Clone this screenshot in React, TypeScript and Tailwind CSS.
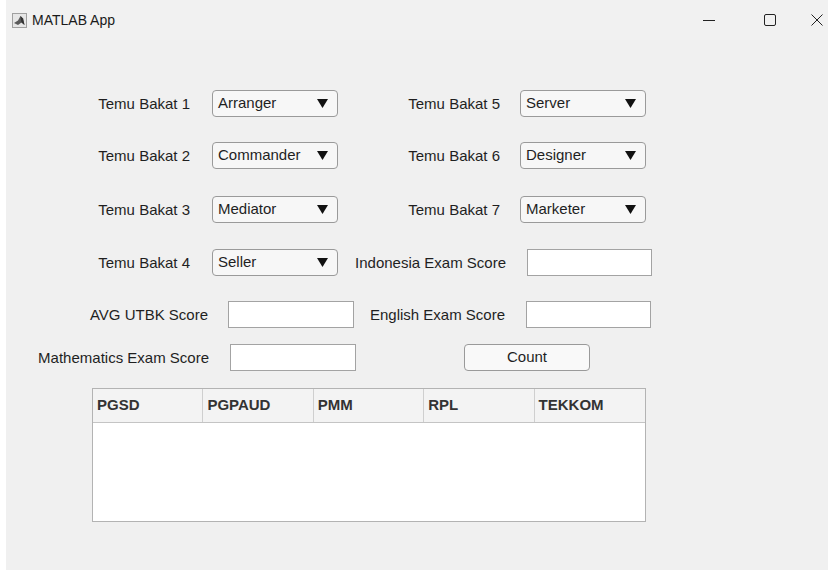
import React from 'react';

const labelCls = 'text-[15px] leading-none text-[#1f1f1f] text-right whitespace-nowrap';

function Dropdown({ value, className = '' }: { value: string; className?: string }) {
  return (
    <div
      className={`h-[27px] w-[126px] flex items-center justify-between pl-[5px] pr-[9px] rounded-[4px] border border-[#9a9a9a] bg-[#f7f7f7] text-[15px] text-[#1f1f1f] ${className}`}
    >
      <span>{value}</span>
      <svg width="11" height="9" viewBox="0 0 11 9">
        <path d="M0 0 H11 L5.5 9 Z" fill="#111" />
      </svg>
    </div>
  );
}

function Field({ className = '' }: { className?: string }) {
  return <div className={`h-[27px] bg-white border border-[#a3a3a3] ${className}`} />;
}

function MatlabIcon() {
  return (
    <svg width="15" height="15" viewBox="0 0 15 15">
      <rect x="0.5" y="0.5" width="14" height="14" fill="#e6e6e6" stroke="#a0a0a0" />
      <path d="M2 10 L6 7.5 L8.5 3 L11 5.5 L12.5 12 L9.5 9.5 L6 12 Z" fill="#5a5a5a" />
      <path d="M8.5 3 L11 5.5 L12.5 12 L9.5 9.5 Z" fill="#333" />
    </svg>
  );
}

const columns = ['PGSD', 'PGPAUD', 'PMM', 'RPL', 'TEKKOM'];

export default function App() {
  return (
    <div className="w-[828px] h-[577px] bg-white font-['Liberation_Sans',Arial,sans-serif] overflow-hidden">
      <div className="ml-[6px] w-[822px] h-[570px] bg-[#f0f0f0] flex flex-col">
        {/* title bar */}
        <div className="h-[40px] bg-[#f1f1f1] flex items-center">
          <div className="ml-[6px]">
            <MatlabIcon />
          </div>
          <span className="ml-[5px] text-[14px] text-[#1a1a1a]">MATLAB App</span>
          <div className="ml-auto flex items-center h-full">
            <svg width="12" height="12" viewBox="0 0 12 12" className="mr-[49px]">
              <path d="M0 6.5 H12" stroke="#222" strokeWidth="1" />
            </svg>
            <svg width="12" height="12" viewBox="0 0 12 12" className="mr-[35px]">
              <rect x="0.5" y="0.5" width="11" height="11" rx="1.5" fill="none" stroke="#222" strokeWidth="1" />
            </svg>
            <svg width="12" height="12" viewBox="0 0 12 12" className="mr-[5px]">
              <path d="M0.5 0.5 L11.5 11.5 M11.5 0.5 L0.5 11.5" stroke="#222" strokeWidth="1" />
            </svg>
          </div>
        </div>

        {/* form */}
        <div className="flex flex-col">
          <div className="mt-[50px] h-[27px] flex items-center">
            <div className={`w-[184px] ${labelCls}`}>Temu Bakat 1</div>
            <Dropdown value="Arranger" className="ml-[22px]" />
            <div className={`w-[162px] ${labelCls}`}>Temu Bakat 5</div>
            <Dropdown value="Server" className="ml-[20px]" />
          </div>
          <div className="mt-[25px] h-[27px] flex items-center">
            <div className={`w-[184px] ${labelCls}`}>Temu Bakat 2</div>
            <Dropdown value="Commander" className="ml-[22px]" />
            <div className={`w-[162px] ${labelCls}`}>Temu Bakat 6</div>
            <Dropdown value="Designer" className="ml-[20px]" />
          </div>
          <div className="mt-[27px] h-[27px] flex items-center">
            <div className={`w-[184px] ${labelCls}`}>Temu Bakat 3</div>
            <Dropdown value="Mediator" className="ml-[22px]" />
            <div className={`w-[162px] ${labelCls}`}>Temu Bakat 7</div>
            <Dropdown value="Marketer" className="ml-[20px]" />
          </div>
          <div className="mt-[26px] h-[27px] flex items-center">
            <div className={`w-[184px] ${labelCls}`}>Temu Bakat 4</div>
            <Dropdown value="Seller" className="ml-[22px]" />
            <div className={`w-[168px] ${labelCls}`}>Indonesia Exam Score</div>
            <Field className="ml-[21px] w-[125px]" />
          </div>
          <div className="mt-[25px] h-[27px] flex items-center">
            <div className={`w-[202px] ${labelCls}`}>AVG UTBK Score</div>
            <Field className="ml-[20px] w-[126px]" />
            <div className={`w-[151px] ${labelCls}`}>English Exam Score</div>
            <Field className="ml-[21px] w-[125px]" />
          </div>
          <div className="mt-[16px] h-[27px] flex items-center">
            <div className={`w-[203px] ${labelCls}`}>Mathematics Exam Score</div>
            <Field className="ml-[21px] w-[126px]" />
            <button className="ml-[108px] w-[126px] h-[27px] rounded-[4px] border border-[#9a9a9a] bg-[#f9f9f9] text-[15px] text-[#1f1f1f]">
              Count
            </button>
          </div>

          {/* results table */}
          <div className="mt-[17px] ml-[86px] w-[554px] h-[134px] border border-[#b3b3b3] bg-white flex flex-col">
            <div className="h-[34px] grid grid-cols-5 bg-[#f3f3f3] border-b border-[#c4c4c4]">
              {columns.map((c, i) => (
                <div
                  key={c}
                  className={`flex items-center pl-[4px] text-[15px] font-bold text-[#333] ${i < columns.length - 1 ? 'border-r border-[#cfcfcf]' : ''}`}
                >
                  {c}
                </div>
              ))}
            </div>
            <div className="flex-1 bg-white" />
          </div>
        </div>
      </div>
    </div>
  );
}
